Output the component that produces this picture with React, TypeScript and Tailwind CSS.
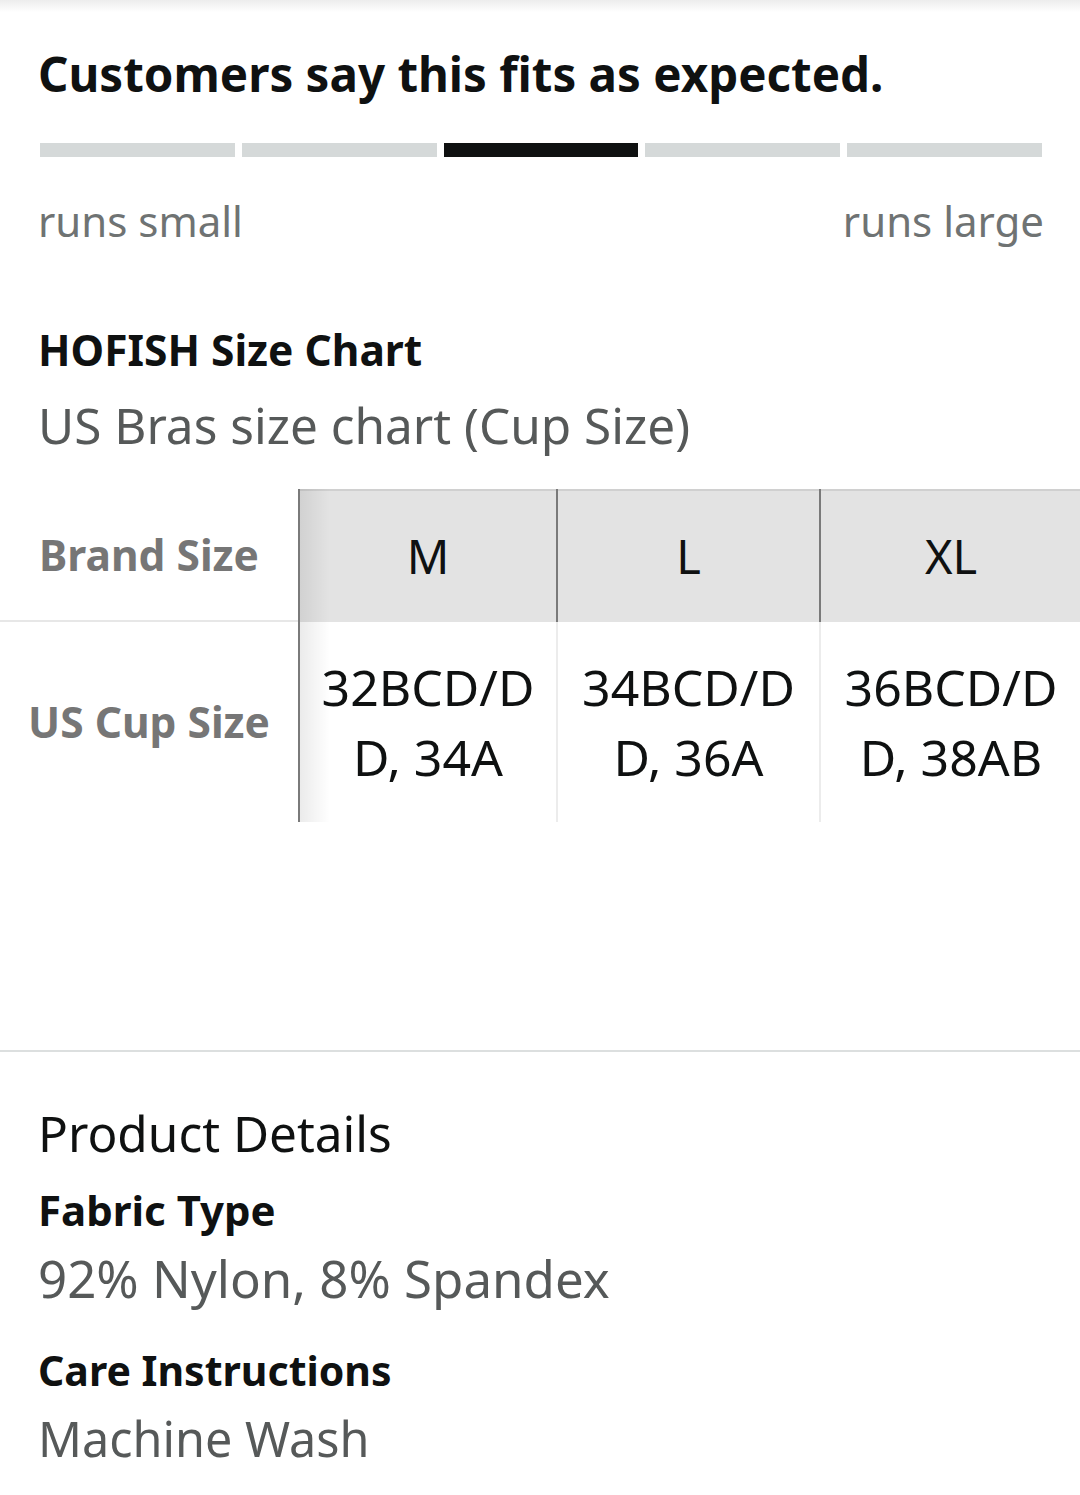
import React from 'react';

const font = { fontFamily: '"Noto Sans", Lato, sans-serif' };

const sizes = [
  { label: 'M', cup: ['32BCD/D', 'D, 34A'] },
  { label: 'L', cup: ['34BCD/D', 'D, 36A'] },
  { label: 'XL', cup: ['36BCD/D', 'D, 38AB'] },
];

function FitBar() {
  return (
    <div className="flex gap-[7px] pl-[2px] pr-[38px]">
      {[0, 1, 2, 3, 4].map((i) => (
        <div key={i} className={`h-[14px] flex-1 ${i === 2 ? 'bg-[#0f1111]' : 'bg-[#d5d9d9]'}`} />
      ))}
    </div>
  );
}

export default function App() {
  return (
    <div className="w-[1080px] h-[1495px] bg-white overflow-hidden relative" style={font}>
      {/* top edge shadow */}
      <div className="absolute top-0 left-0 right-0 h-[12px] bg-gradient-to-b from-[#ededed] to-white" />

      <section className="pl-[38px] pt-[45px]">
        <h2 className="text-[47.5px] leading-[58px] font-bold text-[#0f1111]">
          Customers say this fits as expected.
        </h2>
        <div className="mt-[40px]">
          <FitBar />
        </div>
        <div className="flex justify-between pr-[36px] mt-[38px] text-[42px] leading-[52px] text-[#6f7373]">
          <span>runs small</span>
          <span>runs large</span>
        </div>

        <h3 className="mt-[78px] text-[42.5px] leading-[50px] font-bold text-[#0f1111]">HOFISH Size Chart</h3>
        <p className="mt-[22px] text-[49.5px] leading-[56px] text-[#565959]">US Bras size chart (Cup Size)</p>
      </section>

      {/* size table */}
      <div className="mt-[36px] flex">
        <div className="w-[298px] shrink-0 flex flex-col">
          <div className="h-[133px] flex items-center justify-center border-b-2 border-[#e7e7e7] text-[42.5px] font-bold text-[#767676]">
            Brand Size
          </div>
          <div className="h-[200px] flex items-center justify-center text-[42.5px] font-bold text-[#767676]">
            US Cup Size
          </div>
        </div>
        <div className="flex flex-1 border-l-2 border-[#7a7a7a] relative">
          <div className="absolute left-0 top-0 bottom-0 w-[30px] bg-gradient-to-r from-[#00000014] to-transparent z-10" />
          {sizes.map((s, i) => (
            <div key={s.label} className={`flex flex-col shrink-0 ${i === 0 ? 'w-[256px]' : i === 1 ? 'w-[263px] border-l-2 border-[#7a7a7a]' : 'w-[262px] border-l-2 border-[#7a7a7a]'}`}>
              <div className="h-[133px] bg-[#e3e3e3] border-t-2 border-[#d0d0d0] flex items-center justify-center text-[47px] text-[#0f1111]">
                {s.label}
              </div>
              <div className={`h-[200px] flex flex-col items-center justify-center text-[50px] leading-[70px] text-[#0f1111] ${i > 0 ? '-ml-[2px] border-l-2 border-[#ececec]' : ''}`}>
                <span>{s.cup[0]}</span>
                <span>{s.cup[1]}</span>
              </div>
            </div>
          ))}
        </div>
      </div>

      <div className="mt-[228px] h-[2px] bg-[#dcdfdf]" />

      <section className="pl-[38px] pt-[52px]">
        <h3 className="text-[49.5px] leading-[58px] text-[#0f1111]">Product Details</h3>
        <div className="mt-[24px] text-[42px] leading-[48px] font-bold text-[#0f1111]">Fabric Type</div>
        <div className="mt-[16px] text-[51px] leading-[56px] text-[#565959]">92% Nylon, 8% Spandex</div>
        <div className="mt-[40px] text-[41px] leading-[48px] font-bold text-[#0f1111]">Care Instructions</div>
        <div className="mt-[16px] text-[48.5px] leading-[56px] text-[#565959]">Machine Wash</div>
      </section>
    </div>
  );
}
